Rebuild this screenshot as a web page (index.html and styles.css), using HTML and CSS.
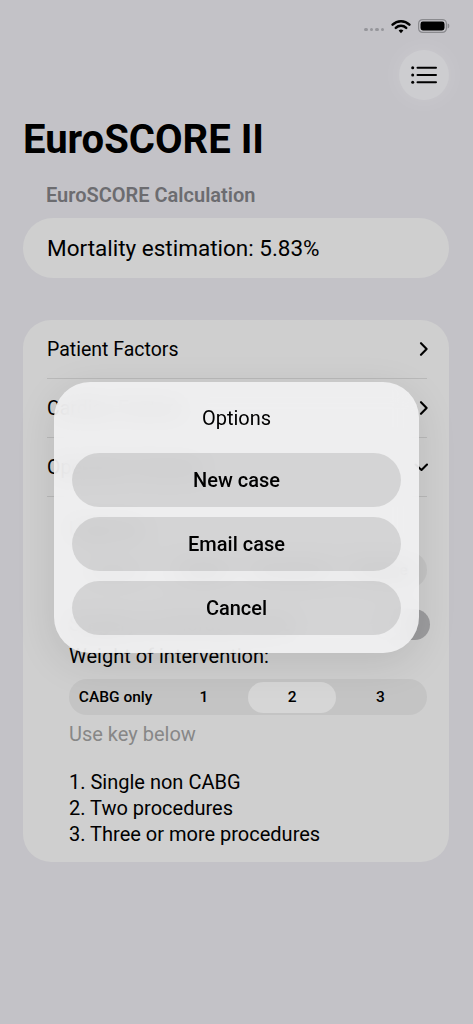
FILE: index.html
```html
<!DOCTYPE html>
<html lang="en">
<head>
    <meta charset="UTF-8">
    <meta name="viewport" content="width=device-width, initial-scale=1.0">
    <title>EuroSCORE II</title>
    <link rel="stylesheet" href="styles.css">
</head>
<body>
    <div class="screen">
        <div class="status-bar">
            <span class="signal"><i></i><i></i><i></i><i></i></span>
            <svg class="wifi" width="20" height="15" viewBox="0 0 20 15">
                <path d="M1.6 5.6 A12 12 0 0 1 18.4 5.6" fill="none" stroke="#000" stroke-width="2.5" stroke-linecap="round"/>
                <path d="M4.8 8.8 A7.4 7.4 0 0 1 15.2 8.8" fill="none" stroke="#000" stroke-width="2.5" stroke-linecap="round"/>
                <path d="M7.6 11.6 L10 14.2 L12.4 11.6 A3.4 3.4 0 0 0 7.6 11.6 Z" fill="#000"/>
            </svg>
            <svg class="battery" width="32" height="14" viewBox="0 0 32 14">
                <rect x="0.6" y="0.6" width="27.8" height="12.8" rx="4" fill="none" stroke="#8a8a8e" stroke-width="1.2"/>
                <rect x="2.5" y="2.5" width="24" height="9" rx="2.4" fill="#000"/>
                <path d="M29.6 4.6 a1.8 2.4 0 0 1 0 4.8 z" fill="#8a8a8e"/>
            </svg>
        </div>

        <div class="nav">
            <button class="menu-btn">
                <svg width="26" height="18" viewBox="0 0 26 18">
                    <circle cx="1.7" cy="1.8" r="1.5" fill="#000"/>
                    <circle cx="1.7" cy="9" r="1.5" fill="#000"/>
                    <circle cx="1.7" cy="16.2" r="1.5" fill="#000"/>
                    <path d="M6.5 1.8 H25 M6.5 9 H25 M6.5 16.2 H25" stroke="#000" stroke-width="2" stroke-linecap="round"/>
                </svg>
            </button>
        </div>

        <h1 class="title">EuroSCORE II</h1>
        <div class="section-header">EuroSCORE Calculation</div>
        <div class="result-pill">Mortality estimation: 5.83%</div>

        <div class="card">
            <div class="row">
                <span>Patient Factors</span>
                <svg class="chevron" width="14" height="14" viewBox="0 0 14 14"><path d="M7 1.2 L12.6 7 L7 12.8" fill="none" stroke="#000" stroke-width="2.1" stroke-linecap="round" stroke-linejoin="round"/></svg>
            </div>
            <div class="row">
                <span>Cardiac Factors</span>
                <svg class="chevron" width="14" height="14" viewBox="0 0 14 14"><path d="M7 1.2 L12.6 7 L7 12.8" fill="none" stroke="#000" stroke-width="2.1" stroke-linecap="round" stroke-linejoin="round"/></svg>
            </div>
            <div class="row">
                <span>Operation Factors</span>
                <svg class="chevron" width="14" height="14" viewBox="0 0 14 14"><path d="M1.5 4.5 L7.5 10 L13 4.5" fill="none" stroke="#000" stroke-width="2.1" stroke-linecap="round" stroke-linejoin="round"/></svg>
            </div>

            <div class="expanded">
                <div class="field-label">Urgency:</div>
                <div class="segmented">
                    <span class="segment selected">Elective</span>
                    <span class="segment">Urgent</span>
                    <span class="segment">Emergency</span>
                    <span class="segment">Salvage</span>
                </div>
                <div class="toggle-row">
                    <span>Surgery on thoracic aorta</span>
                    <span class="toggle"><i></i></span>
                </div>
                <div class="field-label">Weight of intervention:</div>
                <div class="segmented">
                    <span class="segment">CABG only</span>
                    <span class="segment">1</span>
                    <span class="segment selected">2</span>
                    <span class="segment">3</span>
                </div>
                <div class="hint">Use key below</div>
                <div class="key">
                    <div>1. Single non CABG</div>
                    <div>2. Two procedures</div>
                    <div>3. Three or more procedures</div>
                </div>
            </div>
        </div>
    </div>

    <!-- Options dialog -->
    <div class="dialog">
        <div class="dialog-title">Options</div>
        <div class="dialog-buttons">
            <button class="dialog-btn">New case</button>
            <button class="dialog-btn">Email case</button>
            <button class="dialog-btn">Cancel</button>
        </div>
    </div>
</body>
</html>
```

FILE: styles.css
```css
* {
    box-sizing: border-box;
}
html, body {
    margin: 0;
    padding: 0;
}
body {
    background-color: #c3c2c7;
    font-family: Roboto, Inter, "Liberation Sans", sans-serif;
    color: #000;
    min-height: 1024px;
    position: relative;
}
.screen {
    padding: 0 24px 0 23px;
}

/* Status bar */
.status-bar {
    height: 50px;
    padding-top: 2px;
    display: flex;
    justify-content: flex-end;
    align-items: center;
}
.signal {
    display: flex;
    gap: 2px;
    margin-right: 7px;
    margin-top: 7px;
}
.signal i {
    width: 3.5px;
    height: 3.5px;
    border-radius: 50%;
    background: #96969b;
}
.wifi {
    margin-right: 7px;
}
.battery {
    margin-right: -1px;
}

/* Nav */
.nav {
    display: flex;
    justify-content: flex-end;
}
.menu-btn {
    width: 50px;
    height: 50px;
    border-radius: 50%;
    border: none;
    padding: 0;
    background-color: #cdcdd0;
    box-shadow: 0 0 24px rgba(255, 255, 255, 0.15);
    display: flex;
    justify-content: center;
    align-items: center;
}

.title {
    margin: 16px 0 0 0;
    font-size: 40px;
    line-height: 48px;
    font-weight: 700;
}
.section-header {
    margin: 19px 0 0 23px;
    font-size: 20px;
    line-height: 24px;
    font-weight: 600;
    color: #6c6c70;
}
.result-pill {
    margin-top: 11px;
    height: 60px;
    border-radius: 30px;
    background-color: #cfcfcf;
    padding-left: 24px;
    display: flex;
    align-items: center;
    font-size: 22.5px;
}

/* Card */
.card {
    margin-top: 42px;
    background-color: #cfcfcf;
    border-radius: 28px;
    padding: 0 22px 15px 24px;
}
.row {
    height: 59px;
    border-bottom: 1px solid #b9b9b9;
    display: flex;
    justify-content: space-between;
    align-items: center;
    font-size: 19.5px;
}
.chevron {
    margin-right: -1px;
}
.expanded {
    padding: 20px 0 0 22px;
    font-size: 20px;
}
.field-label {
    line-height: 24px;
}
.segmented {
    margin: 10px 0 0;
    height: 36px;
    border-radius: 18px;
    background-color: #c4c4c4;
    padding: 2.5px;
    display: flex;
}
.field-label + .segmented {
    margin-top: 11px;
}
.segment {
    flex: 1;
    display: flex;
    justify-content: center;
    align-items: center;
    border-radius: 16px;
    font-size: 15.5px;
    font-weight: 500;
}
.segment.selected {
    background-color: #d6d6d6;
}
.toggle-row {
    margin-top: 18px;
    height: 36px;
    display: flex;
    justify-content: space-between;
    align-items: center;
}
.toggle {
    width: 58px;
    height: 31px;
    border-radius: 16px;
    background-color: #9c9c9e;
    margin-right: -3px;
    padding: 2px;
    display: flex;
}
.toggle i {
    width: 27px;
    height: 27px;
    border-radius: 50%;
    background: #d0d0d0;
}
.toggle-row + .field-label {
    margin-top: 2px;
}
.hint {
    margin-top: 7px;
    line-height: 24px;
    color: #878787;
}
.key {
    margin-top: 23px;
    line-height: 26px;
}

/* Dialog */
.dialog {
    position: absolute;
    left: 54px;
    top: 382px;
    width: 365px;
    border-radius: 36px;
    background-color: rgba(243, 243, 244, 0.88);
    backdrop-filter: blur(12px);
    box-shadow: 0 10px 40px rgba(0, 0, 0, 0.1);
    padding: 24px 18px 18px;
}
.dialog-title {
    text-align: center;
    font-size: 20px;
    line-height: 24px;
}
.dialog-buttons {
    margin-top: 23px;
    display: flex;
    flex-direction: column;
    gap: 10px;
}
.dialog-btn {
    height: 54px;
    border: none;
    border-radius: 27px;
    background-color: rgba(0, 0, 0, 0.11);
    font-family: inherit;
    font-size: 20px;
    font-weight: 500;
    color: #000;
}
```
